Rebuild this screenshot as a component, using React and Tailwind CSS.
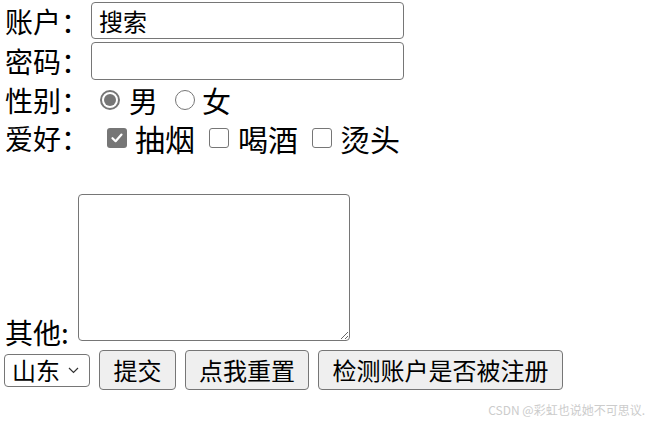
const font = { fontFamily: '"Noto Sans CJK SC", "Noto Sans", sans-serif' }

const Radio = ({ checked }) =>
  checked ? (
    <span className="w-[20px] h-[20px] rounded-full border-[2px] border-[#767676] bg-white flex items-center justify-center flex-none">
      <span className="block w-[12px] h-[12px] rounded-full bg-[#767676]" />
    </span>
  ) : (
    <span className="block w-[20px] h-[20px] rounded-full border-[1.5px] border-[#767676] bg-white flex-none" />
  )

const Check = ({ checked }) =>
  checked ? (
    <span className="w-[20px] h-[20px] rounded-[3px] bg-[#767676] flex items-center justify-center flex-none">
      <svg width="14" height="14" viewBox="0 0 14 14">
        <path d="M2.5 7.2 L5.6 10.2 L11.5 3.6" fill="none" stroke="#fff" strokeWidth="2.2" strokeLinecap="round" strokeLinejoin="round" />
      </svg>
    </span>
  ) : (
    <span className="block w-[20px] h-[20px] rounded-[3px] border-[1.5px] border-[#767676] bg-white flex-none" />
  )

const Btn = ({ children, w }) => (
  <button className={`h-[40px] ${w} rounded-[4px] border border-[#767676] bg-[#efefef] text-[24px] leading-none text-black flex items-center justify-center whitespace-nowrap`}>
    {children}
  </button>
)

const Label = ({ children }) => (
  <span className="w-[91px] flex-none pl-[5px] text-[28px] leading-none whitespace-nowrap">{children}</span>
)

const App = () => {
  return (
    <div className="relative w-[650px] h-[422px] bg-white text-black overflow-hidden" style={font}>
      <div className="flex flex-col pt-[1px]">
        <div className="h-[39px] flex items-center">
          <Label>账户：</Label>
          <div className="w-[313px] h-[37px] rounded-[4px] border border-[#767676] flex items-center pl-[7px] text-[24px] leading-none">
            搜索
          </div>
        </div>
        <div className="h-[41px] flex items-center">
          <Label>密码：</Label>
          <div className="w-[313px] h-[38px] rounded-[4px] border border-[#767676]" />
        </div>
        <div className="h-[38px] flex items-center text-[29px] leading-none">
          <Label>性别：</Label>
          <span className="ml-[9px]"><Radio checked /></span>
          <span className="ml-[9px]">男</span>
          <span className="ml-[17px]"><Radio /></span>
          <span className="ml-[7px]">女</span>
        </div>
        <div className="h-[37px] flex items-center text-[30px] leading-none">
          <Label>爱好：</Label>
          <span className="ml-[16px]"><Check checked /></span>
          <span className="ml-[8px]">抽烟</span>
          <span className="ml-[14px]"><Check /></span>
          <span className="ml-[9px]">喝酒</span>
          <span className="ml-[14px]"><Check /></span>
          <span className="ml-[8px]">烫头</span>
        </div>
        <div className="h-[190px] flex items-end">
          <span className="pl-[5px] w-[78px] flex-none text-[28px] leading-none whitespace-nowrap">其他:</span>
          <textarea className="w-[272px] h-[147px] mb-[5px] rounded-[4px] border border-[#767676] bg-white outline-none" />
        </div>
        <div className="mt-[2px] h-[44px] flex items-center pl-[4px]">
          <div className="w-[86px] h-[33px] rounded-[4px] border border-[#767676] bg-white flex items-center pl-[7px] text-[24px] leading-none">
            山东
            <svg className="ml-[8px]" width="11" height="7" viewBox="0 0 11 7">
              <path d="M1 1 L5.5 5.5 L10 1" fill="none" stroke="#333" strokeWidth="1.2" />
            </svg>
          </div>
          <div className="ml-[9px]"><Btn w="w-[77px]">提交</Btn></div>
          <div className="ml-[9px]"><Btn w="w-[124px]">点我重置</Btn></div>
          <div className="ml-[9px]"><Btn w="w-[245px]">检测账户是否被注册</Btn></div>
        </div>
      </div>
      <span className="absolute right-[5px] bottom-[6px] text-[12px] leading-none text-[#cccccc]">
        CSDN @彩虹也说她不可思议.
      </span>
    </div>
  )
}

export default App
